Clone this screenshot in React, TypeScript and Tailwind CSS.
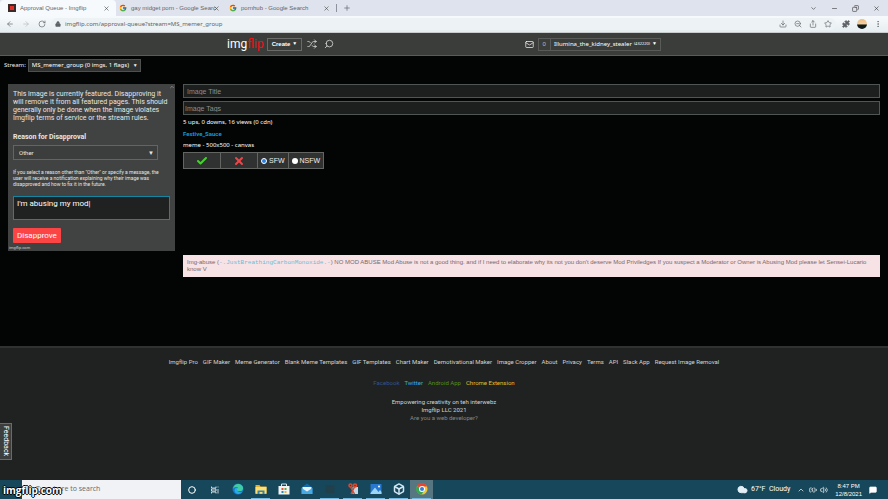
import React from "react";
import {
  ArrowLeft, ArrowRight, RotateCw, Lock, X, Plus, ChevronDown, ChevronUp, Minus, Copy,
  ZoomOut, Share, Star, Puzzle, EllipsisVertical, Shuffle, Search, Mail, Check, Download,
  Cloud, Volume2, MessageSquare, Box, Circle, BatteryCharging,
} from "lucide-react";
import { FcGoogle } from "react-icons/fc";

function Tab({ title, width, active }: { title: string; width: string; active?: boolean }) {
  return (
    <div className={`flex items-center gap-1 pr-1.5 ${width} ${active ? "rounded-t bg-[#f7fafc] pl-2" : "pl-[3px]"}`}>
      {active ? (
        <span className="flex size-2 shrink-0 items-center justify-center bg-[#3b2a2a]">
          <span className="size-1 bg-[#e0302a]" />
        </span>
      ) : (
        <FcGoogle className="size-2 shrink-0" />
      )}
      <span className="min-w-0 flex-1 whitespace-nowrap font-['Liberation_Sans',sans-serif] text-[6px] leading-[8px] text-[#62666b]">{title}</span>
      <button aria-label={`Close ${title}`}><X className="size-[7px] text-[#444]" /></button>
    </div>
  );
}

function BrowserChrome() {
  return (
    <header className="text-[#5f6368]">
      <div className="flex h-4 items-stretch bg-[#dfe3ed]">
        <Tab title="Approval Queue - Imgflip" width="w-[116px]" active />
        <Tab title="gay midget porn - Google Searc" width="w-[110px]" />
        <Tab title="pornhub - Google Search" width="w-[110px]" />
        <button aria-label="New tab" className="my-1 border-l border-[#8e939b] pl-1.5"><Plus className="size-2" /></button>
        <div className="ml-auto flex items-center gap-3.5 pr-2 text-[#333]">
          <button aria-label="Search tabs"><ChevronDown className="size-[7px]" /></button>
          <button aria-label="Minimize"><Minus className="size-[7px]" /></button>
          <button aria-label="Restore"><Copy className="size-[7px] -scale-x-100" /></button>
          <button aria-label="Close"><X className="size-[7px]" /></button>
        </div>
      </div>
      <div className="flex h-[17px] items-center border-b border-[#c9cccd] bg-gradient-to-b from-[#f7fafc] to-[#e6edf0] px-1.5">
        <div className="flex w-[45px] items-center gap-2">
          <button aria-label="Back"><ArrowLeft className="size-2" /></button>
          <button aria-label="Forward"><ArrowRight className="size-2 text-[#b5babd]" /></button>
          <button aria-label="Reload"><RotateCw className="size-2" /></button>
        </div>
        <div className="flex flex-1 items-center gap-1 rounded-full bg-[#edf2f5] px-1">
          <Lock className="size-1.5" fill="currentColor" />
          <input aria-label="Address" defaultValue="imgflip.com/approval-queue?stream=MS_memer_group" className="h-3 min-w-0 flex-1 bg-transparent font-['Noto_Sans',sans-serif] text-[6px] outline-none" />
          <div className="flex items-center gap-[7px]">
            <button aria-label="Install"><Download className="size-2" /></button>
            <button aria-label="Zoom"><ZoomOut className="size-2" /></button>
            <button aria-label="Share"><Share className="size-2" /></button>
            <button aria-label="Bookmark"><Star className="size-2" /></button>
          </div>
        </div>
        <div className="flex items-center gap-[7px] pl-1.5">
          <button aria-label="Extensions"><Puzzle className="size-2" fill="currentColor" /></button>
          <button aria-label="Profile" className="block size-2.5 rounded-full bg-gradient-to-b from-[#eebc82] via-[#f3d1a2] via-50% to-[#11191b] to-60%" />
          <button aria-label="More"><EllipsisVertical className="size-2" /></button>
        </div>
      </div>
    </header>
  );
}

function SiteNav() {
  return (
    <nav className="flex h-[23px] items-center justify-between border-b border-[#595d5a] bg-[#3b3d3b] pr-[227px] pl-[227px]">
      <div className="flex items-center gap-[3px]">
        <a href="#home" className="font-['Roboto',sans-serif] text-[12px] leading-4 text-white">img<span className="text-[#e81616]">flip</span></a>
        <button className="flex h-[13px] items-center gap-0.5 border border-[#686b68] px-1 text-[6px] font-bold text-white">Create<span className="text-[5px]">▼</span></button>
        <button aria-label="Shuffle" className="ml-0.5"><Shuffle className="size-2.5 text-[#d4d6d4]" /></button>
        <button aria-label="Search" className="ml-1"><Search className="size-2.5 -scale-x-100 text-[#d4d6d4]" /></button>
      </div>
      <div className="flex items-center gap-1">
        <button aria-label="Messages"><Mail className="size-[9px]" /></button>
        <div className="flex h-[13px] items-stretch border border-[#585b58]">
          <button className="border-r border-[#585b58] px-1 text-[6px] text-[#bbb]">0</button>
          <button className="flex items-center gap-0.5 px-[3px] font-['Noto_Sans',sans-serif] text-[6px] text-white">Illumina_the_kidney_stealer <span className="text-[4px]">(432220)</span><span className="text-[5px]">▼</span></button>
        </div>
      </div>
    </nav>
  );
}

function DisapprovePanel() {
  return (
    <section className="w-[167px] shrink-0 bg-[#404341] font-['Roboto',sans-serif] text-[#e6e7e6]">
      <div className="relative px-[5px] pt-1.5">
        <button aria-label="Collapse" className="absolute top-0 right-0"><ChevronUp className="size-1.5 text-[#bbb]" /></button>
        <p className="text-[7px] leading-[8px] whitespace-nowrap">
          This image is currently featured. Disapproving it<br />
          will remove it from all featured pages. This should<br />
          generally only be done when the image violates<br />
          Imgflip terms of service or the stream rules.
        </p>
        <label htmlFor="reason" className="mt-2.5 block text-[7px] leading-[10px] font-bold">Reason for Disapproval</label>
        <div className="relative mt-[3px] w-[145px]">
          <select id="reason" className="block h-[15px] w-full appearance-none border border-[#626562] bg-[#3b3e3c] px-[5px] text-[6px] outline-none">
            <option>Other</option>
          </select>
          <span className="pointer-events-none absolute top-1 right-1 text-[6px] leading-[8px]">▼</span>
        </div>
        <p className="mt-[9px] text-[5px] leading-[6px] whitespace-nowrap">
          If you select a reason other than "Other" or specify a message, the<br />
          user will receive a notification explaining why their image was<br />
          disapproved and how to fix it in the future.
        </p>
        <textarea aria-label="Message" defaultValue="I'm abusing my mod|" className="mt-[9px] block h-6 w-full resize-none border border-[#1685a2] bg-[#202221] px-[3px] py-0.5 text-[8px] leading-[10px] text-white outline-none" />
        <button className="mt-2 h-[15px] rounded-[1px] bg-[#fb4545] px-1 text-[8px] text-white">Disapprove</button>
      </div>
      <p className="pl-px text-[4px] leading-[6px] text-[#ccc]">imgflip.com</p>
    </section>
  );
}

function ImageDetails() {
  return (
    <section className="min-w-0 flex-1">
      <div className="flex flex-col gap-[3px]">
        <input aria-label="Image Title" placeholder="Image Title" className="h-3.5 w-full border border-[#505654] bg-[#1c1f1e] px-[3px] text-[7px] outline-none placeholder:text-[#8b8e8c]" />
        <input aria-label="Image Tags" placeholder="Image Tags" className="h-3.5 w-full border border-[#505654] bg-[#1c1f1e] px-px text-[7px] outline-none placeholder:text-[#8b8e8c]" />
      </div>
      <div className="mt-0.5 font-['Noto_Sans',sans-serif] text-[6px] leading-[11px] text-white">
        <p>5 ups, 0 downs, 16 views (0 cdn)</p>
        <p><a href="#user" className="font-['Roboto',sans-serif] font-bold text-[#1498d0]">Festive_Sauce</a></p>
        <p>meme - 500x500 - canvas</p>
      </div>
      <div className="mt-px flex h-[17px] w-fit items-stretch divide-x divide-[#626562] border border-[#626562] bg-[#303231] text-[7px] leading-[15px]">
        <button aria-label="Approve" className="px-3"><Check className="size-3 text-[#46d22d]" strokeWidth={4} /></button>
        <button aria-label="Reject" className="px-3"><X className="size-3 text-[#ee4648]" strokeWidth={4} /></button>
        <label className="flex items-center gap-0.5 px-[3px]">
          <input type="radio" name="rating" defaultChecked className="size-1.5 appearance-none rounded-full border border-white bg-[#287fe0]" />SFW
        </label>
        <label className="flex items-center gap-0.5 px-[3px]">
          <input type="radio" name="rating" className="size-1.5 appearance-none rounded-full bg-white" />NSFW
        </label>
      </div>
      <div className="mt-[86px] bg-[#f7e2e5] px-1 py-1 text-[6px] leading-[7px] text-[#77696c]">
        Img-abuse (<a href="#reporter" className="font-['Liberation_Mono',monospace] text-[#68bed5]">-.JustBreathingCarbonMonoxide.-</a>) NO MOD ABUSE Mod Abuse is not a good thing. and if I need to elaborate why its not you don't deserve Mod Priviledges If you suspect a Moderator or Owner is Abusing Mod please let Sensei-Lucario<br />
        know V
      </div>
    </section>
  );
}

const footerLinks = ["Imgflip Pro", "GIF Maker", "Meme Generator", "Blank Meme Templates", "GIF Templates", "Chart Maker", "Demotivational Maker", "Image Cropper", "About", "Privacy", "Terms", "API", "Slack App", "Request Image Removal"];

function Footer() {
  return (
    <footer className="relative flex-1 border-t-2 border-[#303231] bg-[#202221] text-center font-['Roboto',sans-serif] text-[6px] text-[#d2d4d2]">
      <div className="flex justify-center gap-[5px] pt-2.5 leading-[8px] whitespace-nowrap">
        {footerLinks.map((t) => <a key={t} href="#footer">{t}</a>)}
      </div>
      <div className="mt-[13px] flex justify-center gap-[5px] leading-[8px]">
        <a href="#facebook" className="text-[#34538b]">Facebook</a>
        <a href="#twitter" className="text-[#3da9dc]">Twitter</a>
        <a href="#android" className="text-[#568c16]">Android App</a>
        <a href="#chrome" className="text-[#eabb2a]">Chrome Extension</a>
      </div>
      <div className="mt-[11px] leading-[8px]">
        <p>Empowering creativity on teh interwebz</p>
        <p>Imgflip LLC 2021</p>
        <p><a href="#developer" className="text-[#858785]">Are you a web developer?</a></p>
      </div>
      <button className="absolute bottom-5 left-0 h-[37px] w-3 border border-l-0 border-[#686b68] bg-[#3c3f3d] text-[7px] leading-[10px] text-white [writing-mode:vertical-rl]">Feedback</button>
    </footer>
  );
}

function AppIcon({ name }: { name: string }) {
  return (
    <svg viewBox="0 0 24 24" className="size-3" aria-hidden="true">
      {name === "Edge" && <><circle cx="12" cy="12" r="11" fill="#1479cb" /><path d="M2 12C3 4 10 0 17 3c6 3 7 10 2 13H11c-2-2-2-5 1-7-5-2-8 0-10 3Z" fill="#42cba1" /><path d="M11 9c-3 6 2 11 9 9-6 7-14 4-15-3 0-4 3-6 6-6Z" fill="#2baae8" /></>}
      {name === "Explorer" && <><path d="M1 4h8l2 3h12v15H1Z" fill="#e7ad30" /><path d="M1 8h22v13H1Z" fill="#ffdf70" /><path d="M5 15h14v7h-4v-4H9v4H5Z" fill="#2b84bd" /></>}
      {name === "Store" && <><path d="M7 7V2h10v5" fill="none" stroke="#dce8ee" strokeWidth="2" /><path d="M1 6h22v17H1Z" fill="#f0f4f5" /><path d="M7 10h4v4H7Z" fill="#e45135" /><path d="M13 10h4v4h-4Z" fill="#68a63b" /><path d="M7 16h4v4H7Z" fill="#2389c3" /><path d="M13 16h4v4h-4Z" fill="#eab42d" /></>}
      {name === "Mail" && <><path d="m1 9 11-8 11 8v13H1Z" fill="#1569af" /><path d="M3 8h18v6l-9 5-9-5Z" fill="#e9f4f9" /><path d="m1 10 11 7 11-7v12H1Z" fill="#47a9e2" /></>}
      {name === "Terminal" && <path d="M3 4h18v16H3Z" fill="#20414c" />}
      {name === "Snip" && <><path d="M11 8h11v14H11Z" fill="#c3d8e5" /><path d="m7 8 8 14M15 8 8 22" stroke="#df492d" strokeWidth="3" /><circle cx="7" cy="5" r="3" fill="none" stroke="#df492d" strokeWidth="3" /><circle cx="16" cy="5" r="3" fill="none" stroke="#df492d" strokeWidth="3" /></>}
      {name === "Photos" && <><path d="M1 2h22v20H1Z" fill="#2877d1" /><path d="m1 20 9-11 7 9 3-4 3 4v4H1Z" fill="#9bd5f5" /><circle cx="18" cy="7" r="2" fill="#fff" /></>}
      {name === "Chrome" && <><circle cx="12" cy="12" r="11" fill="#f2c62f" /><path d="M12 12 2 6a11 11 0 0 1 20 1H12Z" fill="#e94335" /><path d="M12 12 2 6a11 11 0 0 0 9 17l6-9Z" fill="#35a853" /><circle cx="12" cy="12" r="6" fill="#fff" /><circle cx="12" cy="12" r="4" fill="#3c79d8" /></>}
    </svg>
  );
}

function Taskbar() {
  const apps = ["Edge", "Explorer", "Store", "Mail", "Terminal", "Snip", "Photos", "VirtualBox", "Chrome"];
  return (
    <div className="relative flex h-[19px] items-stretch bg-[#17475a] text-white">
      <div className="w-[22px]" />
      <input aria-label="Search" placeholder="Type here to search" className="w-[159px] bg-[#f0f2f5] pl-[14px] font-['Open_Sans',sans-serif] text-[7px] outline-none placeholder:text-[#66696d]" />
      <div className="flex">
        <button aria-label="Cortana" className="flex w-[22px] items-center justify-center"><Circle className="size-2" strokeWidth={3} /></button>
        <button aria-label="Task view" className="flex w-[23px] items-center justify-center">
          <svg viewBox="0 0 16 16" className="size-2" fill="none" stroke="currentColor" strokeWidth="1.5"><path d="M1 1v3h9V1M1 15v-3h9v3M1 6h9v4H1ZM14 1v2M14 6v9" /></svg>
        </button>
        {apps.map((a, i) => (
          <button key={a} aria-label={a} className={`flex w-[23px] items-center justify-center ${a === "Chrome" ? "bg-[#567681]" : ""}`}>
            <span className={`flex h-full w-[19px] items-center justify-center border-b ${i === 1 || i > 3 ? "border-[#74b8dd]" : "border-transparent"}`}>
              {a === "VirtualBox" ? <Box className="size-3 text-[#d1e5f2]" strokeWidth={3} /> : <AppIcon name={a} />}
            </span>
          </button>
        ))}
      </div>
      <div className="ml-auto flex items-center gap-[3px] pr-[11px] font-['Open_Sans',sans-serif]">
        <Cloud className="size-[11px] text-[#e2edf5]" fill="currentColor" />
        <span className="mr-1 font-['Roboto',sans-serif] text-[7px] whitespace-pre">67°F  Cloudy</span>
        <ChevronUp className="mr-px size-2" />
        <BatteryCharging className="size-2" />
        <Volume2 className="size-2" />
        <span className="mx-1 text-center font-['Liberation_Sans',sans-serif] text-[6px] leading-[8px]">8:47 PM<br />12/8/2021</span>
        <MessageSquare className="size-2" fill="currentColor" />
      </div>
      <span className="absolute top-0 left-[3px] font-['Open_Sans',sans-serif] text-[10px] leading-[20px] font-bold text-white [text-shadow:1px_0_#000,-1px_0_#000,0_1px_#000,0_-1px_#000]">imgflip.com</span>
    </div>
  );
}

export default function App() {
  return (
    <div className="flex min-h-screen flex-col overflow-hidden bg-[#030404] font-['Liberation_Sans',Arial,sans-serif] text-[#eee]">
      <BrowserChrome />
      <SiteNav />
      <main className="px-2 pb-[69px]">
        <div className="flex items-center gap-0.5 pt-[3px] font-['Noto_Sans',sans-serif] text-[6px]">
          <label htmlFor="stream" className="-ml-1">Stream:</label>
          <div className="relative">
            <select id="stream" className="block h-[13px] w-[113px] appearance-none border border-[#4d504d] bg-[#303231] px-[3px] text-[6px] text-white outline-none">
              <option>MS_memer_group (0 imgs, 1 flags)</option>
            </select>
            <span className="pointer-events-none absolute top-0.5 right-[3px] text-[5px] leading-[9px]">▼</span>
          </div>
        </div>
        <div className="mt-3 flex items-start gap-2">
          <DisapprovePanel />
          <ImageDetails />
        </div>
      </main>
      <Footer />
      <Taskbar />
    </div>
  );
}
